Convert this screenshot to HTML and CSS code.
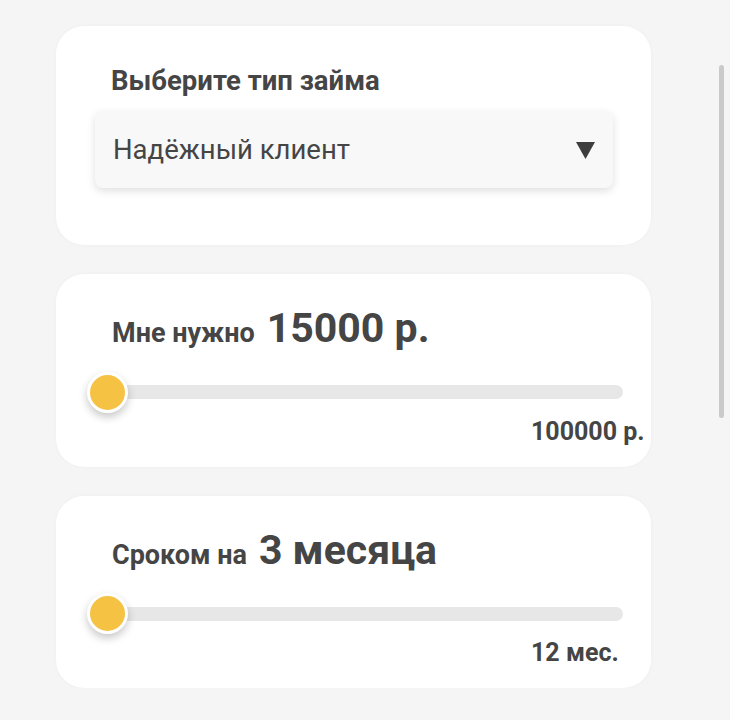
FILE: index.html
```html
<!DOCTYPE html>
<html lang="ru">
<head>
<meta charset="utf-8">
<title>Займ</title>
<link rel="stylesheet" href="styles.css">
</head>
<body>
<main class="page">
  <section class="card card-type">
    <h2 class="card-title">Выберите тип займа</h2>
    <div class="select">
      <span class="select-value">Надёжный клиент</span>
      <svg class="select-arrow" width="19" height="17" viewBox="0 0 19 17"><polygon points="0,0 19,0 9.5,17" fill="#3d3d3d"/></svg>
    </div>
  </section>

  <section class="card card-slider">
    <div class="slider-title">
      <span class="slider-label">Мне нужно</span>
      <span class="slider-value">15000 р.</span>
    </div>
    <div class="slider">
      <div class="slider-track"></div>
      <div class="slider-thumb"></div>
    </div>
    <div class="slider-max">100000 р.</div>
  </section>

  <section class="card card-slider">
    <div class="slider-title">
      <span class="slider-label">Сроком на</span>
      <span class="slider-value">3 месяца</span>
    </div>
    <div class="slider">
      <div class="slider-track"></div>
      <div class="slider-thumb"></div>
    </div>
    <div class="slider-max">12 мес.</div>
  </section>
</main>
<div class="scroll-indicator"></div>
</body>
</html>
```

FILE: styles.css
```css
* { box-sizing: border-box; }

html, body {
  margin: 0;
  padding: 0;
  background: #f5f5f5;
  font-family: Roboto, "Noto Sans", sans-serif;
  color: #454545;
}

.page {
  display: flex;
  flex-direction: column;
  gap: 29px;
  width: 595px;
  margin-left: 56px;
  padding-top: 26px;
}

.card {
  background: #ffffff;
  border-radius: 28px;
  box-shadow: 0 0 4px rgba(0, 0, 0, 0.03);
}

.card-type {
  padding: 40px 38px 57px 39px;
}

.card-title {
  margin: 0 0 15px 16px;
  font-size: 27.5px;
  line-height: 30px;
  font-weight: 700;
}

.select {
  height: 77px;
  display: flex;
  align-items: center;
  justify-content: space-between;
  padding: 0 18px 0 18px;
  background: #f8f8f8;
  border-radius: 8px;
  box-shadow: 0 3px 8px rgba(0, 0, 0, 0.13);
}

.select-value {
  font-size: 27.5px;
  line-height: 1;
  font-weight: 400;
  color: #454545;
}

.select-arrow {
  display: block;
  margin-top: 2px;
}

.card-slider {
  padding: 34px 0 20px 0;
}

.slider-title {
  display: flex;
  align-items: baseline;
  gap: 12px;
  padding-left: 56px;
}

.slider-label {
  font-size: 27px;
  line-height: 1;
  font-weight: 700;
}

.slider-value {
  font-size: 41px;
  line-height: 1;
  font-weight: 700;
}

.slider {
  position: relative;
  display: flex;
  align-items: center;
  height: 41px;
  margin: 22.5px 28px 0 31px;
}

.slider-track {
  flex: 1;
  height: 14px;
  margin-left: 20px;
  border-radius: 7px;
  background: #e7e7e7;
}

.slider-thumb {
  position: absolute;
  left: 0;
  top: 0;
  width: 41px;
  height: 41px;
  border-radius: 50%;
  background: #f5c243;
  border: 3px solid #ffffff;
  box-shadow: 0 4px 9px rgba(0, 0, 0, 0.22);
}

.slider-max {
  margin: 4px 0 0 475px;
  font-size: 25px;
  line-height: 30px;
  font-weight: 700;
}

.scroll-indicator {
  position: fixed;
  left: 719px;
  top: 65px;
  width: 5px;
  height: 353px;
  border-radius: 3px;
  background: #cacaca;
}
```
